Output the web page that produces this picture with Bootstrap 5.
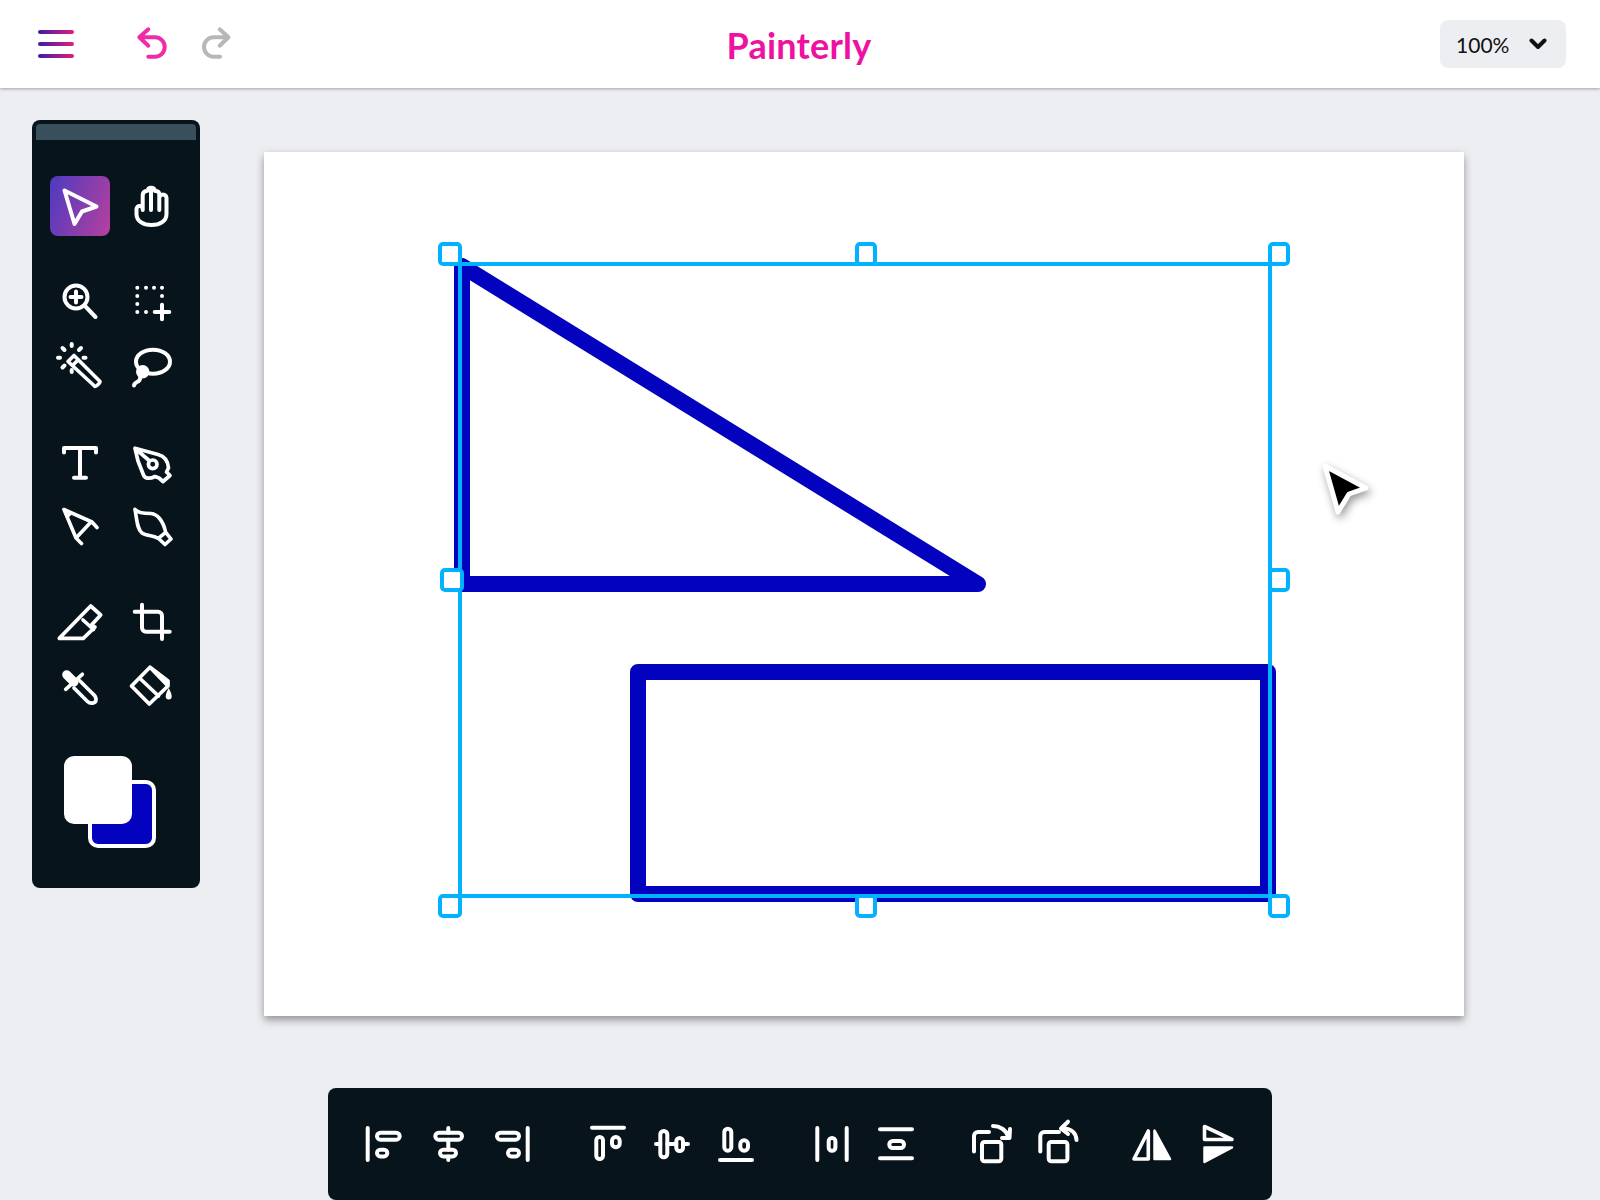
<!DOCTYPE html>
<html lang="en">
<head>
<meta charset="utf-8">
<title>Painterly</title>
<link rel="stylesheet" href="https://cdn.jsdelivr.net/npm/bootstrap@5.3.0/dist/css/bootstrap.min.css">
<style>
html,body{height:1200px;overflow:hidden}
body{background:#edeef2;font-family:"Lato","Liberation Sans",sans-serif}
.app-top{height:88px;background:#fff;box-shadow:0 1px 3px rgba(0,0,0,.32);padding:0 34px 0 32px;position:relative;z-index:2}
.top-side{flex:1 1 0}
.top-ico{width:48px;height:48px;fill:none;stroke-width:4;stroke-linecap:round;stroke-linejoin:round;display:block}
.undo-ico{stroke:#ee2ba8;margin-left:48px}
.redo-ico{stroke:#b7b7b7;margin-left:16px}
.brand-word{font-family:"Lato","Liberation Sans",sans-serif;font-weight:700;font-size:36px;line-height:48px;color:#ee12a2;margin-top:2px;letter-spacing:.2px}
.zoom-pick{width:126px;height:48px;background:#edeef2;border-radius:8px;color:#111;font-size:21px;line-height:1;padding:0 19px 0 16px}
.zoom-pick svg{width:18px;height:12px;fill:none;stroke:#111;stroke-width:4;stroke-linecap:round;stroke-linejoin:round}
.work-row{padding:32px 0 0 32px}
.tool-panel{width:168px;height:768px;background:#07141b;border-radius:8px;padding:4px 0 0 0;flex:none}
.panel-grip{height:16px;background:#3a4f5c;margin:0 4px;border-radius:4px 4px 0 0}
.tool-group{display:grid;grid-template-columns:60px 60px;column-gap:12px;row-gap:4px;padding-left:18px;margin-top:36px}
.tool-cell{width:60px;height:60px;padding:0;border:0;background:transparent;border-radius:8px;display:block}
.tool-on{background:linear-gradient(110deg,#4d3ac0,#b6409e)}
.ico{width:60px;height:60px;display:block;fill:none;stroke:#fff;stroke-width:4;stroke-linecap:round;stroke-linejoin:round}
.ico .solid{fill:#fff}
.ico .nostroke{stroke:none;fill:#fff}
.swatch-pair{width:92px;height:92px;margin:40px 0 0 32px;position:relative}
.swatch-front,.swatch-back{position:absolute;width:68px;height:68px;border-radius:10px}
.swatch-front{left:0;top:0;background:#fff;z-index:1}
.swatch-back{left:24px;top:24px;background:#0303bf;border:4px solid #fff}
.art-board{width:1200px;height:864px;background:#fff;margin:32px 0 0 64px;box-shadow:0 4px 8px rgba(0,0,0,.38);flex:none}
.art-board svg{display:block}
.shape-line{fill:none;stroke:#0303bf;stroke-width:16;stroke-linejoin:round;stroke-linecap:round}
.sel-line{fill:none;stroke:#00b2ff;stroke-width:4}
.sel-knob{fill:#fff;stroke:#00b2ff;stroke-width:4}
.arrow-cursor{fill:#000;stroke:#fff;stroke-width:5;stroke-linejoin:round;filter:drop-shadow(2px 4px 4px rgba(0,0,0,.4))}
.align-bar{width:944px;height:112px;margin:72px auto 0;background:#07141b;border-radius:8px;padding:26px}
.align-set{display:flex;gap:4px;margin-right:36px}
.align-set:last-child{margin-right:0}
</style>
</head>
<body>
<header class="app-top d-flex align-items-center">
  <div class="top-side d-flex align-items-center">
    <svg class="top-ico" viewBox="0 0 48 48" stroke="url(#burger)"><defs><linearGradient id="burger" gradientUnits="userSpaceOnUse" x1="6" y1="0" x2="42" y2="0"><stop offset="0" stop-color="#3d1ba4"/><stop offset="1" stop-color="#e0207e"/></linearGradient></defs><path d="M8 12H40M8 24H40M8 36H40"/></svg>
    <svg class="top-ico undo-ico" viewBox="0 0 48 48"><path d="M20.3 9.3 11.3 17.3 20.3 25.700M11.3 17.3H27a9.700 9.700 0 0 1 0 19.400H20.3"/></svg>
    <svg class="top-ico redo-ico" viewBox="0 0 48 48"><path d="M27.700 9.3 36.500 17.3 27.700 25.700M36.500 17.3H21.700a9.700 9.700 0 0 0 0 19.400H28"/></svg>
  </div>
  <div class="brand-word">Painterly</div>
  <div class="top-side d-flex justify-content-end">
    <div class="zoom-pick d-flex align-items-center justify-content-between"><span>100%</span><svg viewBox="0 0 18 12"><path d="M2.500 2.500 9 9l6.500-6.500"/></svg></div>
  </div>
</header>

<main>
  <div class="work-row d-flex align-items-start">
    <aside class="tool-panel">
      <div class="panel-grip"></div>
      <div class="tool-group">
        <button class="tool-cell tool-on" aria-label="Select"><svg class="ico" viewBox="0 0 60 60"><path d="M14.500 14.500 46.500 30.500 32 35.500 24.500 48Z"/></svg></button>
        <button class="tool-cell" aria-label="Hand"><svg class="ico" viewBox="0 0 60 60"><path d="M14.500 33V38C14.500 45 21 49 29.500 49S44.500 45 44.500 38V22A3.600 3.600 0 0 0 37.300 22M14.500 33A3.100 3.100 0 0 1 20.700 33M20.700 34V19Q21 15 25.500 14.800 26 11.700 29 11.700 32.500 11.700 33 15 37 14.800 37.300 18V34M29 12V34"/></svg></button>
      </div>
      <div class="tool-group">
        <button class="tool-cell" aria-label="Zoom"><svg class="ico" viewBox="0 0 60 60"><circle cx="26" cy="25" r="11.500"/><path d="M34.500 33.500 45.500 45M20.500 25H31.500M26 19.500V30.500"/></svg></button>
        <button class="tool-cell" aria-label="Marquee"><svg class="ico" viewBox="0 0 60 60"><path d="M15.300 15.700h.01M24 15.700h.01M32 15.700h.01M40 15.700h.01M15.300 24h.01M15.300 32h.01M15.300 40h.01M24 40h.01M40 24h.01M32.700 40H47.300M40 32.700V47.300"/></svg></button>
        <button class="tool-cell" aria-label="Wand"><svg class="ico" viewBox="0 0 60 60"><path stroke-width="3.600" d="M18 25.500 24 19.500 50 45.500C50.500 46.500 46 51 45 50.500ZM22.500 29.500 28 24"/><path d="M21.700 8V10M8 21.700H10M21.700 34V36M33.500 21.700H35.500M12.500 12 14.500 14M31 12 29 14M12.500 31.500 14.500 29.500"/></svg></button>
        <button class="tool-cell" aria-label="Lasso"><svg class="ico" viewBox="0 0 60 60"><ellipse cx="31" cy="25.700" rx="17" ry="12"/><circle class="solid" cx="20.700" cy="35.700" r="5.200" stroke-width="3"/><path d="M18 42C18.500 47 12.500 45 12 49.500"/></svg></button>
      </div>
      <div class="tool-group">
        <button class="tool-cell" aria-label="Text"><svg class="ico" viewBox="0 0 60 60"><path d="M14 20.500V16H46V20.500M30 16V45.700M24 45.700H36"/></svg></button>
        <button class="tool-cell" aria-label="Pen"><svg class="ico" viewBox="0 0 60 60"><path stroke-width="3.700" d="M13 16.300 36 22.500C42 24 46 29 46.500 36L44.500 40 48 43.500 41 49.500 37 46 33 44.500C28 47 23 47 21.500 43L16 29ZM13 16.300 26.500 28"/><circle cx="30.700" cy="32.300" r="4.300" stroke-width="3.700"/></svg></button>
        <button class="tool-cell" aria-label="Anchor"><svg class="ico" viewBox="0 0 60 60"><path stroke-width="3.600" d="M14 13.500 42 26 47 31.500M14 13.500 26 42 31.500 47.500M26 42 41 26M17 20.500 21 17"/></svg></button>
        <button class="tool-cell" aria-label="Curve"><svg class="ico" viewBox="0 0 60 60"><path stroke-width="3.600" d="M13 13.300C16 17 22 17.500 29 17.500 35 18 41 24 43.700 36.300L49 43 43 48.500 36.300 42.300C30 39 24 40 20 37 15 33 15 24 13 13.300ZM36.300 42.300 43.700 36.300"/></svg></button>
      </div>
      <div class="tool-group">
        <button class="tool-cell" aria-label="Eraser"><svg class="ico" viewBox="0 0 60 60"><path stroke-width="3.700" d="M9.300 46.300H33.300L45 35 41.500 33 50.700 23 40.700 14ZM33 28 43.500 37.500"/></svg></button>
        <button class="tool-cell" aria-label="Crop"><svg class="ico" viewBox="0 0 60 60"><path d="M20 12.700V35.700A4 4 0 0 0 24 39.700H47.700M12.700 19.700H36A4 4 0 0 1 40 23.700V47"/></svg></button>
        <button class="tool-cell" aria-label="Eyedropper"><svg class="ico" viewBox="0 0 60 60"><path stroke-width="9" d="M16.700 18.700 24 26"/><path stroke-width="3.700" d="M15.700 33.300 32.300 18.300M24 32 37.500 45.500C40 48 46 48 46 43.500 46 41.500 45 39.500 43 38L30 25"/></svg></button>
        <button class="tool-cell" aria-label="Fill"><svg class="ico" viewBox="0 0 60 60"><path stroke-width="3.700" d="M28 11.300 9.500 30 27.300 48 46 30ZM17.500 22 36.500 40M28 11.300 46 25V30"/><path class="nostroke" d="M46.700 32c2 4 3 6 3 8.500a3 3 0 0 1-6 0c0-2.500 1-4.500 3-8.500Z"/></svg></button>
      </div>
      <div class="swatch-pair"><div class="swatch-back"></div><div class="swatch-front"></div></div>
    </aside>

    <section class="art-board">
      <svg width="1200" height="864" viewBox="264 152 1200 864">
        <path class="shape-line" d="M462 266V584H978Z"/>
        <rect class="shape-line" x="638" y="672" width="630" height="222"/>
        <rect class="sel-line" x="460" y="264" width="810" height="632"/>
        <rect class="sel-knob" x="440" y="244" width="20" height="20" rx="3"/>
        <rect class="sel-knob" x="857" y="244" width="18" height="20" rx="3"/>
        <rect class="sel-knob" x="1270" y="244" width="18" height="20" rx="3"/>
        <rect class="sel-knob" x="442" y="570" width="20" height="20" rx="3"/>
        <rect class="sel-knob" x="1270" y="570" width="18" height="20" rx="3"/>
        <rect class="sel-knob" x="440" y="896" width="20" height="20" rx="3"/>
        <rect class="sel-knob" x="857" y="896" width="18" height="20" rx="3"/>
        <rect class="sel-knob" x="1270" y="896" width="18" height="20" rx="3"/>
        <path class="arrow-cursor" d="M1325 466 1366 488 1349 494 1338 512Z"/>
      </svg>
    </section>
  </div>

  <nav class="align-bar d-flex">
    <div class="align-set">
      <svg class="ico" viewBox="0 0 60 60"><path d="M13.700 14V46"/><rect x="23" y="18.700" width="22.700" height="7" rx="3.500"/><rect x="23" y="35.700" width="10.300" height="6.700" rx="3.300"/></svg>
      <svg class="ico" viewBox="0 0 60 60"><path d="M30.300 14V18.700M30.300 25.700V35.700M30.300 42.400V46"/><rect x="17.300" y="18.700" width="26.700" height="7" rx="3.500"/><rect x="22" y="35.700" width="16" height="6.700" rx="3.300"/></svg>
      <svg class="ico" viewBox="0 0 60 60"><path d="M45.700 14V46"/><rect x="15" y="18.700" width="22" height="7" rx="3.500"/><rect x="26" y="35.700" width="11" height="6.700" rx="3.300"/></svg>
    </div>
    <div class="align-set">
      <svg class="ico" viewBox="0 0 60 60"><path d="M14 13.700H46"/><rect x="18.300" y="23" width="6.700" height="22" rx="3.300"/><rect x="34" y="23" width="7.700" height="10.300" rx="3.800"/></svg>
      <svg class="ico" viewBox="0 0 60 60"><path d="M14 30H18.300M25.300 30H34.300M41 30H46"/><rect x="18.300" y="17" width="7" height="26.300" rx="3.500"/><rect x="34.300" y="24" width="6.700" height="13" rx="3.300"/></svg>
      <svg class="ico" viewBox="0 0 60 60"><path d="M14 46H46"/><rect x="18.300" y="14.700" width="7" height="22" rx="3.500"/><rect x="34.300" y="26.300" width="7.700" height="10.400" rx="3.800"/></svg>
    </div>
    <div class="align-set">
      <svg class="ico" viewBox="0 0 60 60"><path d="M15.300 14V46M44.700 14V46"/><rect x="26.700" y="24" width="6.700" height="12.700" rx="3.300"/></svg>
      <svg class="ico" viewBox="0 0 60 60"><path d="M14 15.300H46M14 44.300H46"/><rect x="23.300" y="27" width="14.700" height="7" rx="3.500"/></svg>
    </div>
    <div class="align-set">
      <svg class="ico" viewBox="0 0 60 60"><path d="M12 37.500V22A4 4 0 0 1 16 18H27"/><rect x="20" y="28" width="19.300" height="19.300" rx="2.500"/><path d="M31 12C38 12 44 16 46 22M48 15 47.500 24 40 24"/></svg>
      <svg class="ico" viewBox="0 0 60 60"><path d="M14.300 37.500V22A4 4 0 0 1 18.300 18H33"/><rect x="22.700" y="28" width="18.700" height="19.300" rx="2.500"/><path d="M36 14.500C44 14 50 18 50.500 26M42 7.700 35 14.500 42 20"/></svg>
    </div>
    <div class="align-set">
      <svg class="ico" viewBox="0 0 60 60"><path stroke-width="3.600" d="M26.300 17V45H12Z"/><path class="solid" stroke-width="2.500" d="M32.500 16.500V45H48Z"/></svg>
      <svg class="ico" viewBox="0 0 60 60"><path stroke-width="3.600" d="M18.500 12.500 46 25.500H18.500Z"/><path class="solid" stroke-width="2.500" d="M18.500 33.500H46L18.500 48Z"/></svg>
    </div>
  </nav>
</main>
<script src="https://cdn.jsdelivr.net/npm/bootstrap@5.3.0/dist/js/bootstrap.bundle.min.js"></script>
</body>
</html>
